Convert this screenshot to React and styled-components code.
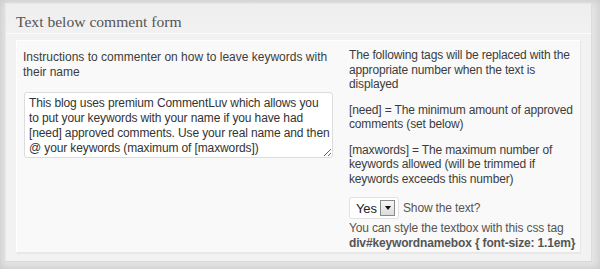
import React from "react";
import styled, { createGlobalStyle } from "styled-components";

const GlobalStyle = createGlobalStyle`
  html, body {
    margin: 0;
    padding: 0;
  }
  body {
    background: #e2e2e2;
    font-family: "Liberation Sans", Arial, sans-serif;
  }
`;

const Frame = styled.div`
  width: 600px;
  height: 269px;
  box-sizing: border-box;
  padding: 3px 8px 7px 5px;
  background: #e4e4e4;
  box-shadow: inset 0 0 8px rgba(0, 0, 0, 0.14);
`;

const Panel = styled.div`
  height: 100%;
  box-sizing: border-box;
  display: flex;
  flex-direction: column;
  background: #f2f2f2;
  border: 1px solid #e8e8e8;
  border-right-color: #dcdcdc;
  border-bottom-color: #d8d8d8;
`;

const Title = styled.h3`
  margin: 0;
  height: 29px;
  padding: 0 10px;
  line-height: 36px;
  font-family: "Liberation Serif", "Times New Roman", serif;
  font-size: 15.6px;
  font-weight: normal;
  color: #555;
  background: linear-gradient(#eeeeee, #f1f1f1);
  border-bottom: 1px solid #fbfbfb;
`;

const Body = styled.div`
  flex: 1;
  min-height: 0;
  margin: 6px 10px 8px 10px;
  padding: 7px 2px 0 6px;
  display: grid;
  grid-template-columns: 326px 1fr;
  background: #f9f9f9;
  border: 1px solid #e6e6e6;
  border-top-color: #fff;
  border-left-color: #fff;
  box-shadow: 0 1px 0 #e9e9e9;
  color: #3c3c3c;
  font-size: 12px;
`;

const Cell = styled.div`
  padding-top: ${(p) => p.$offset || 0}px;
  letter-spacing: ${(p) => p.$tight || 0}px;
`;

const Text = styled.p`
  margin: 0 0 ${(p) => p.$gap ?? 11}px 0;
  max-width: ${(p) => p.$max || "none"};
  line-height: ${(p) => p.$lh || 14.5}px;
  font-weight: ${(p) => (p.$bold ? "bold" : "normal")};
  color: ${(p) => (p.$muted ? "#555" : "inherit")};
  white-space: ${(p) => (p.$nowrap ? "nowrap" : "normal")};
`;

const Area = styled.textarea`
  display: block;
  width: 309px;
  height: 66px;
  box-sizing: border-box;
  margin: 0 0 0 1px;
  padding: 3px 1.5px 3px 4px;
  font-family: "Liberation Sans", Arial, sans-serif;
  font-size: 12px;
  letter-spacing: -0.12px;
  line-height: 15px;
  color: #333;
  background: #fff;
  border: 1px solid #dcdcdc;
  border-radius: 3px;
  resize: vertical;
  overflow: hidden;
`;

const OptionRow = styled.div`
  display: flex;
  align-items: center;
  gap: 4px;
  margin: 1px 0 2px 0;
  color: #555;
`;

const Select = styled.div`
  width: 50px;
  height: 22px;
  box-sizing: border-box;
  display: flex;
  align-items: center;
  justify-content: space-between;
  padding: 0 3px 0 6px;
  background: #fff;
  border: 1px solid #e2e2e2;
  border-radius: 3px;
  font-size: 13px;
  color: #222;
`;

const Arrow = styled.span`
  width: 15px;
  height: 16px;
  box-sizing: border-box;
  display: flex;
  align-items: center;
  justify-content: center;
  background: linear-gradient(#f6f6f6, #dcdcdc);
  border: 1px solid #8a8a8a;

  &::after {
    content: "";
    border-left: 3.5px solid transparent;
    border-right: 3.5px solid transparent;
    border-top: 4px solid #111;
  }
`;

const App = () => (
  <>
    <GlobalStyle />
    <Frame>
      <Panel>
        <Title>Text below comment form</Title>
        <Body>
          <Cell $offset={2}>
            <Text $lh={15} $gap={12} $max="305px">
              Instructions to commenter on how to leave keywords with their name
            </Text>
            <Area
              defaultValue="This blog uses premium CommentLuv which allows you to put your keywords with your name if you have had [need] approved comments. Use your real name and then @ your keywords (maximum of [maxwords])"
            />
          </Cell>
          <Cell $tight={-0.15}>
            <Text>
              The following tags will be replaced with the appropriate number
              when the text is displayed
            </Text>
            <Text>[need] = The minimum amount of approved comments (set below)</Text>
            <Text $gap={11}>
              [maxwords] = The maximum number of keywords allowed (will be
              trimmed if keywords exceeds this number)
            </Text>
            <OptionRow>
              <Select>
                Yes
                <Arrow />
              </Select>
              Show the text?
            </OptionRow>
            <Text $muted $gap={0}>You can style the textbox with this css tag</Text>
            <Text $muted $bold $nowrap $gap={0}>
              div#keywordnamebox {"{ font-size: 1.1em}"}
            </Text>
          </Cell>
        </Body>
      </Panel>
    </Frame>
  </>
);

export default App;
